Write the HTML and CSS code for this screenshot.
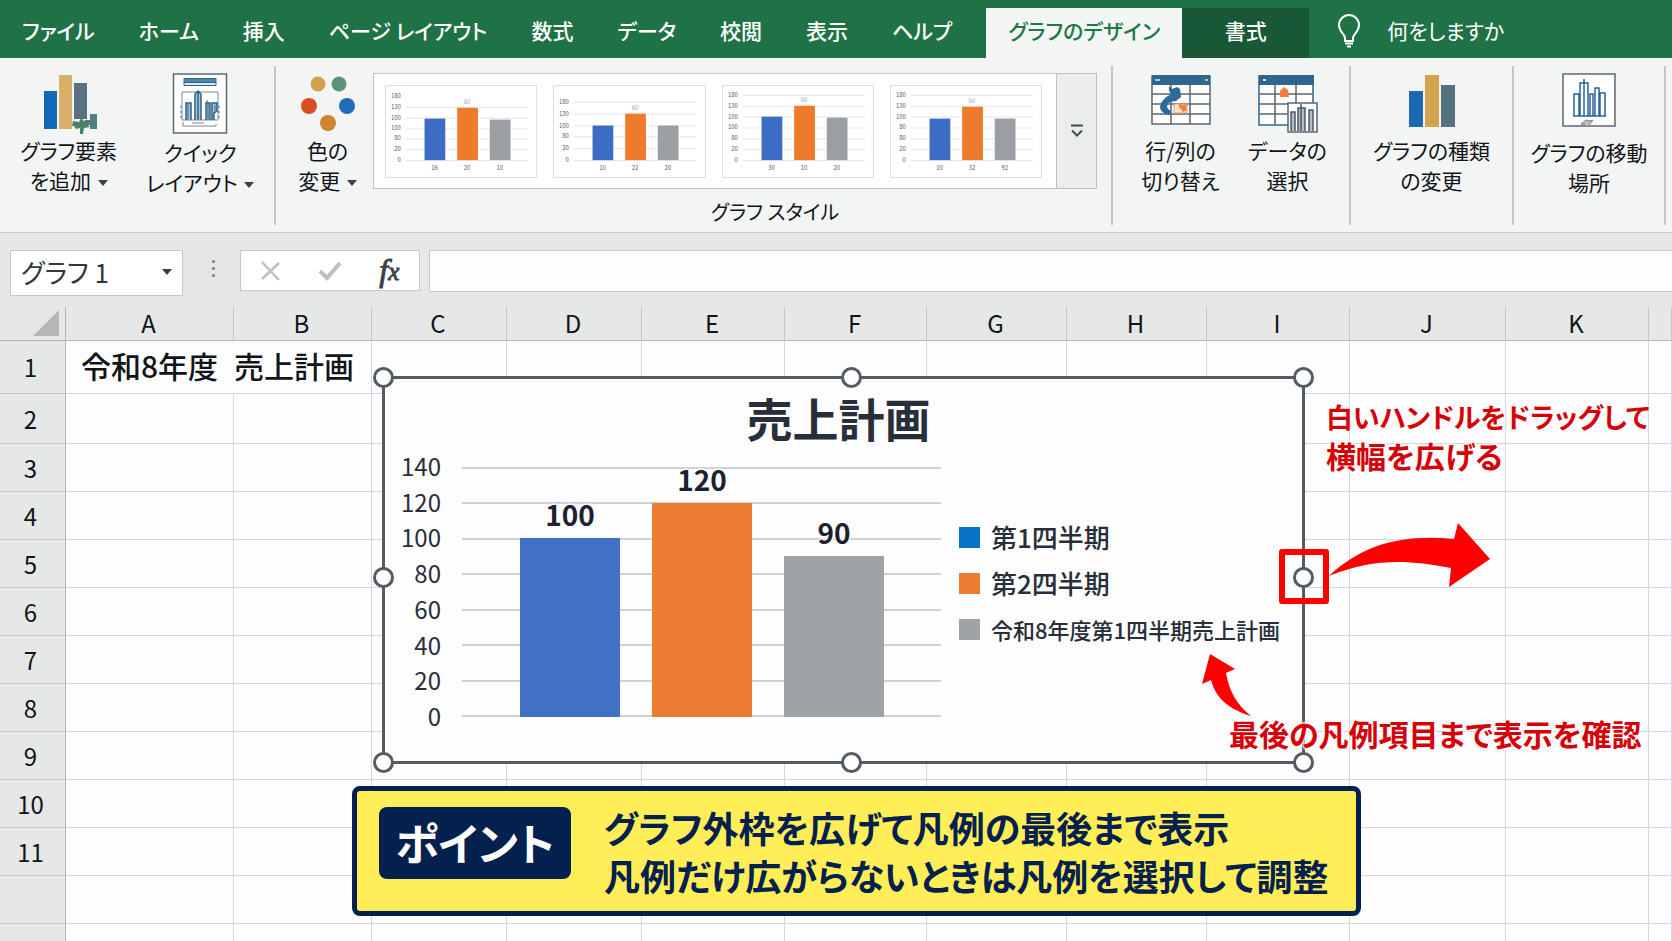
FILE: index.html
```html
<!DOCTYPE html>
<html lang="ja">
<head>
    <meta charset="UTF-8">
    <meta name="viewport" content="width=device-width, initial-scale=1.0">
    <title>売上計画</title>
    <link rel="stylesheet" href="styles.css">
</head>
<body>

    <!-- Tabs -->
    <nav class="tabs">
        <a class="tab" href="#">ファイル</a>
        <a class="tab" href="#">ホーム</a>
        <a class="tab" href="#">挿入</a>
        <a class="tab" href="#">ページ レイアウト</a>
        <a class="tab" href="#">数式</a>
        <a class="tab" href="#">データ</a>
        <a class="tab" href="#">校閲</a>
        <a class="tab" href="#">表示</a>
        <a class="tab" href="#">ヘルプ</a>
        <a class="tab active" href="#">グラフのデザイン</a>
        <a class="tab dark" href="#">書式</a>
        <label class="tell-me">
            <svg width="24" height="34" viewBox="0 0 24 34" fill="none" stroke="#fff" stroke-width="2">
                <path d="M8 27v-3c0-4-6-6-6-13a10 10 0 0 1 20 0c0 7-6 9-6 13v3z"/>
                <path d="M8 29.500h8M10 32.500h4"/>
            </svg>
            <input type="text" placeholder="何をしますか" aria-label="何をしますか">
        </label>
    </nav>

    <!-- Ribbon -->
    <div class="ribbon">
        <div class="group group-layout">
            <button class="ribbon-btn">
                <svg width="56" height="62" viewBox="0 0 56 62">
                    <path fill="#1269b5" d="M3 18h13v38H3z"/>
                    <path fill="#d8b06a" d="M18 2h13v54H18z"/>
                    <path fill="#5a7284" d="M33 10h13v36H33z"/>
                    <path fill="#4f7f86" d="M49 41h7v15h-7v-4h-5v-5h5z"/>
                    <path fill="#4c8163" d="M32 48l6 1 2-4 3 3 6-1-3 4 3 3-6 1-1 6h-3v-6l-4 1-2-3-2 0z"/>
                </svg>
                <span>グラフ要素<br>を追加 <i class="caret"></i></span>
            </button>
            <button class="ribbon-btn low">
                <svg width="56" height="62" viewBox="0 0 56 62" fill="none" stroke="#2f6288">
                    <path fill="#fff" stroke="#5d6678" stroke-width="1.500" d="M1.500 1h53v59h-53z"/>
                    <path fill="#4f86ab" d="M12 5.500h32v4H12z"/>
                    <path fill="#dfe8ee" d="M12 9.500h32v3H12z"/>
                    <path stroke="#7b8796" d="M10 19h36v28H10zM11 49v4h33v-2M20 50h12"/>
                    <path fill="#a9c6d8" stroke-width="1.500" d="M14 47V30h5v17M23 47V21l3-3 3 3v26M34 47V30h4v17M40 47V30h5v8l-3 2v7M26 19v28"/>
                    <path stroke-dasharray="2 3" d="M9 33v13M47 33v13"/>
                    <path d="M16 31v16M36 31v16M35 27v3M43 32v6"/>
                </svg>
                <span>クイック<br>レイアウト <i class="caret"></i></span>
            </button>
        </div>

        <div class="group group-styles">
            <button class="ribbon-btn">
                <svg width="56" height="62" viewBox="0 0 56 62">
                    <circle cx="18" cy="11" r="7.500" fill="#d3a04d"/>
                    <circle cx="39" cy="11" r="7.500" fill="#5d957b"/>
                    <circle cx="9" cy="33" r="8" fill="#d84e22"/>
                    <circle cx="47" cy="33" r="8" fill="#1f6cb8"/>
                    <circle cx="28" cy="50" r="8" fill="#cf8432"/>
                </svg>
                <span>色の<br>変更 <i class="caret"></i></span>
            </button>
            <div class="gallery-box">
                <div class="gallery">
                    <div class="thumbs" id="thumbs"></div>
                    <button class="gallery-more" aria-label="その他">
                        <svg width="14" height="14" viewBox="0 0 14 14" fill="none" stroke="#444a52" stroke-width="2">
                            <path d="M1 1.500h12M2 6.500l5 5 5-5"/>
                        </svg>
                    </button>
                </div>
                <div class="gallery-title">グラフ スタイル</div>
            </div>
        </div>

        <div class="group group-data">
            <button class="ribbon-btn">
                <svg width="60" height="62" viewBox="0 0 60 62">
                    <path fill="#fff" stroke="#5b6470" stroke-width="1.500" d="M1 3h58v48H1z"/>
                    <path fill="#2e668c" d="M1 2h58v10H1z"/>
                    <path fill="none" stroke="#5b6470" stroke-width="1.500" d="M1 21h58M1 31h58M1 41h58M20 12v39M39 12v39"/>
                    <path fill="#2d6a9d" d="M18 13l3 3 5-2 3 2 1 8-5 4-6 1c-4 3-4 6 1 9l-1 4c-5 0-10-4-10-8 1-6 6-11 12-13l-3-3z"/>
                    <path fill="#fbe3d4" stroke="#ef9a66" d="M23 31h13v9H23z"/>
                    <path fill="#ef7f3e" d="M28 30l3 2 5-1-1 4 1 2-4 2-2-3-2-2z"/>
                    <path stroke="#dce8ef" stroke-width="1.500" d="M4 7h5M54 7h3"/>
                </svg>
                <span>行/列の<br>切り替え</span>
            </button>
            <button class="ribbon-btn">
                <svg width="60" height="62" viewBox="0 0 60 62">
                    <path fill="#fff" stroke="#2e668c" stroke-width="1.500" d="M1 3h54v49H1z"/>
                    <path fill="#2e668c" d="M1 2h55v10H1z"/>
                    <path fill="none" stroke="#5b6470" stroke-width="1.500" d="M1 21h54M1 31h54M1 41h54M17 12v39M38 12v39"/>
                    <path fill="#f0803a" d="M22 24v-6l4-4 4 3 1 7z"/>
                    <path fill="#fff" stroke="#5b6470" stroke-width="1.500" d="M30 30h29v29H30z"/>
                    <path fill="#b5bcc4" stroke="#4c5868" stroke-width="1.500" d="M33 58V39h4v19M40 58V35h7v23M51 58V37h4v21M43 31v27"/>
                    <path stroke="#dce8ef" stroke-width="2" d="M5 7h3"/>
                </svg>
                <span>データの<br>選択</span>
            </button>
        </div>

        <div class="group group-type">
            <button class="ribbon-btn">
                <svg width="48" height="62" viewBox="0 0 48 62">
                    <path fill="#1c68b3" d="M1 18h14v36H1z"/>
                    <path fill="#d5a24c" d="M17 2h14v52H17z"/>
                    <path fill="#54737f" d="M33 12h14v42H33z"/>
                </svg>
                <span>グラフの種類<br>の変更</span>
            </button>
        </div>

        <div class="group group-move">
            <button class="ribbon-btn low">
                <svg width="54" height="62" viewBox="0 0 54 62" fill="none" stroke="#2a639b" stroke-width="1.500">
                    <path fill="#fff" stroke="#5d6678" d="M1 1h52v52H1z"/>
                    <path d="M12 43V21h5v22M18 43V10h8v33M28 43V21h3v22M33 43V15h4v28M38 43V20h5v23M22 6v37M11 43h33"/>
                    <path fill="#b9bec4" stroke="#777e86" stroke-width="1" d="M19 51l5-4 4 1 3-1-3 4-3 3-2-2z"/>
                </svg>
                <span>グラフの移動<br>場所</span>
            </button>
        </div>
    </div>

    <!-- Formula bar -->
    <div class="formula-bar">
        <div class="name-box">
            <select aria-label="名前ボックス">
                <option>グラフ 1</option>
            </select>
            <i class="caret"></i>
        </div>
        <div class="dots"><i></i><i></i><i></i></div>
        <div class="fx-box">
            <button aria-label="キャンセル">
                <svg width="22" height="22" viewBox="0 0 22 22" fill="none" stroke="#bdbfc1" stroke-width="2.500"><path d="M2 2l17 18M19 3L2 19"/></svg>
            </button>
            <button aria-label="入力">
                <svg width="24" height="22" viewBox="0 0 24 22" fill="none" stroke="#bdbfc1" stroke-width="4"><path d="M2 11l7 7L22 3"/></svg>
            </button>
            <button class="fx" aria-label="関数の挿入">f<small>x</small></button>
        </div>
        <input class="formula" type="text" aria-label="数式バー">
    </div>

    <!-- Sheet -->
    <main class="sheet">
        <table class="grid">
            <colgroup>
                <col class="c-head"><col class="c-a"><col class="c-b"><col class="c-c"><col class="c-d"><col class="c-e">
                <col class="c-f"><col class="c-g"><col class="c-h"><col class="c-i"><col class="c-j"><col class="c-k"><col>
            </colgroup>
            <thead>
                <tr id="gridHead"></tr>
            </thead>
            <tbody id="gridBody"></tbody>
        </table>

        <section class="chart">
            <h1>売上計画</h1>
            <div class="chart-body">
                <div class="axis" id="axis"></div>
                <div class="plot">
                    <div class="lines" id="lines"></div>
                    <div class="bars" id="bars"></div>
                </div>
                <ul class="legend">
                    <li><i class="q1"></i>第1四半期</li>
                    <li><i class="q2"></i>第2四半期</li>
                    <li class="long"><i class="q3"></i>令和8年度第1四半期売上計画</li>
                </ul>
            </div>
            <i class="handle top left"></i>
            <i class="handle top center"></i>
            <i class="handle top right"></i>
            <i class="handle middle left"></i>
            <i class="handle middle right"></i>
            <i class="handle bottom left"></i>
            <i class="handle bottom center"></i>
            <i class="handle bottom right"></i>
            <i class="handle-mark"></i>
        </section>

        <svg class="arrow-wide" width="162" height="66" viewBox="0 0 162 66">
            <path fill="#fe0000" d="M0 54C34 22 74 12 125 17L129 1L161 37L120 65L122 46C76 37 42 37 0 54z"/>
        </svg>
        <svg class="arrow-small" width="50" height="64" viewBox="0 0 50 64">
            <path fill="#fe0000" d="M8 1L33 16L24 20C27 38 35 52 49 63C27 56 14 46 9 27L0 31z"/>
        </svg>

        <p class="note note-drag"><small>白いハンドルをドラッグして</small><br>横幅を広げる</p>
        <p class="note note-legend">最後の凡例項目まで表示を確認</p>

        <aside class="point">
            <strong>ポイント</strong>
            <p>グラフ外枠を広げて凡例の最後まで表示<br>凡例だけ広がらないときは凡例を選択して調整</p>
        </aside>
    </main>

    <script>
        const columns = ["A", "B", "C", "D", "E", "F", "G", "H", "I", "J", "K", ""];
        const cells = { A1: "令和8年度", B1: "売上計画" };
        const rowCount = 13;
        const labelledRows = 11;

        const axisMax = 140;
        const series = [
            { value: 100, color: "q1" },
            { value: 120, color: "q2" },
            { value: 90, color: "q3" }
        ];

        // top: first axis line, ticks: axis labels, bars: bar tops, base line is at y 75
        const styles = [
            { ticks: ["180", "130", "100", "100", "80", "20", "0"], top: 10, first: 1, bars: [33, 22, 34], x: ["16", "20", "10"] },
            { ticks: ["180", "130", "100", "80", "20", "0"], top: 16, first: 0, bars: [40, 28, 40], x: ["10", "22", "20"] },
            { ticks: ["180", "130", "100", "100", "80", "20", "0"], top: 9, first: 0, bars: [31, 20, 32], x: ["30", "10", "20"] },
            { ticks: ["180", "130", "100", "80", "80", "20", "0"], top: 9, first: 0, bars: [33, 21, 33], x: ["10", "32", "92"] }
        ];
        const colors = ["#3c6cc3", "#ee7a2b", "#9b9ea3"];

        function loadThumbs() {
            document.getElementById("thumbs").innerHTML = styles.map((s, n) => {
                const step = (75 - s.top) / (s.ticks.length - 1);
                let svg = "";
                s.ticks.forEach((t, i) => {
                    const y = Math.round(s.top + step * i);
                    if (i >= s.first) svg += `<path stroke="#e4e5e8" d="M20 ${y}.5h124"/>`;
                    svg += `<text x="15" y="${y + 2}" text-anchor="end">${t}</text>`;
                });
                s.bars.forEach((y, i) => {
                    svg += `<rect x="${39 + 33 * i}" y="${y}" width="21" height="${75 - y}" fill="${colors[i]}"/>`;
                    svg += `<text x="${49 + 33 * i}" y="85" text-anchor="middle">${s.x[i]}</text>`;
                });
                svg += `<text class="pale" x="82" y="${s.bars[1] - 4}" text-anchor="middle">60</text>`;
                return `<button class="thumb" aria-label="スタイル ${n + 1}"><svg viewBox="0 0 152 92">${svg}</svg></button>`;
            }).join("");
        }

        function loadGrid() {
            document.getElementById("gridHead").innerHTML =
                `<th class="corner"><i></i></th>` + columns.map(c => `<th scope="col">${c}</th>`).join("");

            let rows = "";
            for (let r = 1; r <= rowCount; r++) {
                rows += `<tr><th scope="row">${r <= labelledRows ? r : ""}</th>`;
                rows += columns.map(c => `<td>${cells[c + r] || ""}</td>`).join("") + "</tr>";
            }
            document.getElementById("gridBody").innerHTML = rows;
        }

        function loadChart() {
            let ticks = "", lines = "";
            for (let v = axisMax; v >= 0; v -= 20) {
                ticks += `<span>${v}</span>`;
                lines += "<i></i>";
            }
            document.getElementById("axis").innerHTML = ticks;
            document.getElementById("lines").innerHTML = lines;
            document.getElementById("bars").innerHTML = series.map(s =>
                `<div class="bar ${s.color}" style="height: ${s.value / axisMax * 100}%"><b>${s.value}</b></div>`
            ).join("");
        }

        loadThumbs();
        loadGrid();
        loadChart();
    </script>

</body>
</html>
```
FILE: styles.css
```css
* {
    box-sizing: border-box;
}

body {
    margin: 0;
    min-height: 100vh;
    display: flex;
    flex-direction: column;
    overflow: hidden;
    background: #fdfdfd;
    color: #111419;
    font-family: "Noto Sans CJK JP", "Noto Sans", sans-serif;
    font-feature-settings: "palt";
}

button,
input,
select {
    font: inherit;
    font-feature-settings: inherit;
    color: inherit;
    border: none;
    background: none;
    padding: 0;
    margin: 0;
    border-radius: 0;
    outline: none;
}

svg {
    display: block;
}

.caret {
    display: inline-block;
    margin-left: 2px;
    border: 5px solid transparent;
    border-top: 6px solid #3b4048;
    border-bottom: none;
    vertical-align: middle;
}

/* Tabs */
.tabs {
    display: flex;
    align-items: flex-end;
    height: 58px;
    padding-top: 8px;
    background: #1f7246;
    white-space: nowrap;
}

.tab {
    height: 50px;
    padding: 0 22px;
    line-height: 44px;
    font-size: 21px;
    font-weight: 500;
    color: #fff;
    text-decoration: none;
}

.tab.active {
    width: 196px;
    margin-left: 12px;
    padding: 0;
    text-align: center;
    background: #f4f5f5;
    color: #1b7a45;
}

.tab.dark {
    width: 127px;
    padding: 0;
    text-align: center;
    background: #185836;
}

.tell-me {
    display: flex;
    align-items: center;
    gap: 26px;
    height: 50px;
    padding: 0 0 4px 28px;
}

.tell-me input {
    width: 200px;
    padding-bottom: 2px;
    font-size: 21px;
    color: #fff;
}

.tell-me input::placeholder {
    color: #fff;
    opacity: 1;
}

/* Ribbon */
.ribbon {
    display: flex;
    height: 175px;
    padding: 8px 6px 7px 0;
    background: #f3f4f4;
    border-bottom: 1px solid #cdcfcf;
}

.group {
    display: flex;
    border-right: 2px solid #c3c5c8;
}

.group-layout {
    width: 276px;
    padding: 0 8px 0 3px;
}

.group-styles {
    flex: 1;
    padding-right: 14px;
}

.group-data {
    width: 238px;
    padding: 0 8px 0 14px;
}

.group-type {
    width: 163px;
}

.group-move {
    width: 152px;
}

.ribbon-btn {
    flex: 1;
    display: flex;
    flex-direction: column;
    align-items: center;
    padding-top: 7px;
    font-size: 21px;
    line-height: 30px;
    white-space: nowrap;
}

.ribbon-btn.low {
    gap: 2px;
}

.group-styles .ribbon-btn {
    flex: none;
    width: 97px;
    padding-left: 6px;
}

.gallery-box {
    flex: 1;
    padding-top: 7px;
}

.gallery {
    display: flex;
    height: 116px;
    background: #fff;
    border: 1px solid #bfc2c4;
}

.thumbs {
    flex: 1;
    display: grid;
    grid-template-columns: repeat(4, 1fr);
    gap: 16px;
    padding: 11px 14px 11px 11px;
}

.thumb {
    border: 1px solid #dcdee1;
    background: #fff;
}

.thumb svg {
    width: 100%;
}

.thumb text {
    font-size: 6px;
    fill: #555b66;
}

.thumb .pale {
    fill: #a3a7b0;
}

.gallery-more {
    width: 40px;
    display: flex;
    align-items: center;
    justify-content: center;
    background: #ebecec;
    border-left: 1px solid #bfc2c4;
}

.gallery-title {
    padding: 8px 0 0 80px;
    font-size: 20px;
    line-height: 30px;
    text-align: center;
}

/* Formula bar */
.formula-bar {
    display: flex;
    height: 74px;
    padding: 17px 0 15px 10px;
    background: #e6e7e7;
}

.name-box {
    position: relative;
    width: 173px;
    height: 46px;
    background: #fff;
    border: 1px solid #c6c8ca;
}

.name-box select {
    width: 100%;
    height: 100%;
    padding: 0 0 3px 10px;
    appearance: none;
    font-size: 26px;
    color: #32363d;
}

.name-box .caret {
    position: absolute;
    right: 10px;
    top: 18px;
}

.dots {
    display: flex;
    flex-direction: column;
    gap: 4px;
    width: 57px;
    padding: 10px 0 0 29px;
}

.dots i {
    width: 3px;
    height: 3px;
    border-radius: 50%;
    background: #777a7e;
}

.fx-box {
    display: flex;
    align-items: center;
    width: 180px;
    height: 41px;
    background: #fff;
    border: 1px solid #c6c8ca;
}

.fx-box button {
    flex: 1;
    display: flex;
    justify-content: center;
}

.fx-box .fx {
    font-family: "Liberation Serif", serif;
    font-style: italic;
    font-size: 32px;
    line-height: 28px;
    color: #3d4249;
    -webkit-text-stroke: 1px #3d4249;
}

.fx small {
    padding-top: 2px;
    font-size: 25px;
}

.formula {
    flex: 1;
    height: 42px;
    margin-left: 9px;
    padding: 0 10px;
    font-size: 24px;
    background: #fdfdfd;
    border: 1px solid #c6c8ca;
    border-right: none;
}

/* Sheet */
.sheet {
    position: relative;
    flex: 1;
}

.grid {
    width: 100%;
    table-layout: fixed;
    border-collapse: separate;
    border-spacing: 0;
}

.c-head { width: 66px; }
.c-a { width: 168px; }
.c-b { width: 138px; }
.c-c { width: 135px; }
.c-d { width: 135px; }
.c-e { width: 143px; }
.c-f { width: 142px; }
.c-g { width: 140px; }
.c-h { width: 140px; }
.c-i { width: 143px; }
.c-j { width: 156px; }
.c-k { width: 143px; }

.grid th,
.grid td {
    height: 48px;
    padding: 0;
    border-right: 1px solid #d3d7dd;
    border-bottom: 1px solid #d3d7dd;
    white-space: nowrap;
}

.grid th {
    font-size: 24px;
    font-weight: 400;
    line-height: 32px;
    background: #e6e7e7;
    border-color: #b4b7ba;
}

.grid thead th {
    height: 34px;
    padding: 0 2px 2px 0;
    line-height: 30px;
}

.grid thead th:not(.corner) {
    border-right-color: #c3c6c9;
}

.grid tbody th {
    border-bottom-color: #c3c6c9;
    padding-right: 4px;
}

.grid .corner i {
    display: block;
    width: 0;
    margin-left: 33px;
    border-left: 26px solid transparent;
    border-bottom: 26px solid #b4b6b8;
}

.grid tbody tr:first-child > * {
    height: 53px;
}

.grid tbody tr:nth-child(2) > * {
    height: 50px;
}

.grid tbody tr:first-child td {
    padding-bottom: 4px;
    font-size: 30px;
    font-weight: 500;
    line-height: 40px;
}

.grid tbody tr:first-child td:nth-child(2) {
    text-align: center;
    border-right-color: transparent;
}

/* Chart */
.chart {
    position: absolute;
    left: 382px;
    top: 69px;
    width: 923px;
    height: 388px;
    background: #fdfdfd;
    border: 3px solid #555b62;
    color: #282e3a;
}

.chart h1 {
    margin: 8px 10px 0 0;
    font-size: 46px;
    line-height: 60px;
    font-weight: 700;
    text-align: center;
}

.chart-body {
    display: flex;
    padding-top: 7px;
}

.axis {
    display: flex;
    flex-direction: column;
    justify-content: space-between;
    width: 56px;
    height: 274px;
    font-size: 24px;
    line-height: 24px;
    text-align: right;
}

.plot {
    position: relative;
    width: 479px;
    height: 250px;
    margin: 13px 18px 0 21px;
}

.lines {
    position: absolute;
    inset: 0;
    display: flex;
    flex-direction: column;
    justify-content: space-between;
}

.lines i {
    height: 2px;
    background: #ced1d6;
}

.bars {
    position: relative;
    display: flex;
    align-items: flex-end;
    gap: 32px;
    height: 100%;
    padding-left: 58px;
}

.bar {
    width: 100px;
}

.bar b {
    display: block;
    margin-top: -41px;
    font-size: 28px;
    line-height: 34px;
    text-align: center;
    color: #1b2130;
    text-shadow: 0 0 3px #fff, 0 0 3px #fff, 0 0 3px #fff, 0 0 3px #fff;
}

.bar.q1 { background: #4071c4; }
.q2 { background: #ec7c31; }
.q3 { background: #a0a3a6; }

.legend {
    display: flex;
    flex-direction: column;
    gap: 20px;
    margin: 0;
    padding: 70px 0 0;
    list-style: none;
    font-size: 26px;
    font-weight: 500;
    line-height: 26px;
    white-space: nowrap;
}

.legend li {
    display: flex;
    align-items: center;
    gap: 11px;
}

.legend .long {
    font-size: 22px;
}

.legend i {
    width: 21px;
    height: 21px;
}

.legend .q1 { background: #0673c6; }

.handle {
    position: absolute;
    width: 21px;
    height: 21px;
    background: #fff;
    border: 3px solid #555b62;
    border-radius: 50%;
}

.handle.top { top: -12px; }
.handle.middle { top: 188px; }
.handle.bottom { bottom: -12px; }
.handle.left { left: -12px; }
.handle.center { left: 456px; }
.handle.right { right: -12px; }

.handle-mark {
    position: absolute;
    right: -27px;
    top: 170px;
    width: 50px;
    height: 55px;
    border: 6px solid #fe0000;
    border-radius: 3px;
}

/* Annotations */
.arrow-wide {
    position: absolute;
    left: 1329px;
    top: 215px;
}

.arrow-small {
    position: absolute;
    left: 1202px;
    top: 346px;
}

.note {
    position: absolute;
    margin: 0;
    font-size: 30px;
    font-weight: 700;
    line-height: 38px;
    white-space: nowrap;
    color: #d60006;
    text-shadow: 0 0 3px #fff, 0 0 3px #fff, 0 0 3px #fff, 0 0 3px #fff;
}

.note small {
    font-size: 27px;
}

.note-drag {
    left: 1326px;
    top: 89px;
}

.note-legend {
    left: 1229px;
    top: 407px;
}

.point {
    position: absolute;
    left: 352px;
    top: 479px;
    display: flex;
    align-items: flex-start;
    gap: 33px;
    width: 1009px;
    height: 130px;
    padding: 12px 22px 0;
    background: #ffee57;
    border: 5px solid #04204e;
    border-radius: 8px;
    color: #04204e;
    white-space: nowrap;
}

.point strong {
    width: 192px;
    height: 72px;
    margin-top: 4px;
    border-radius: 8px;
    background: #04204e;
    color: #fff;
    font-size: 44px;
    line-height: 70px;
    text-align: center;
}

.point p {
    margin: 0;
    font-size: 36px;
    font-weight: 700;
    line-height: 48px;
}
```
